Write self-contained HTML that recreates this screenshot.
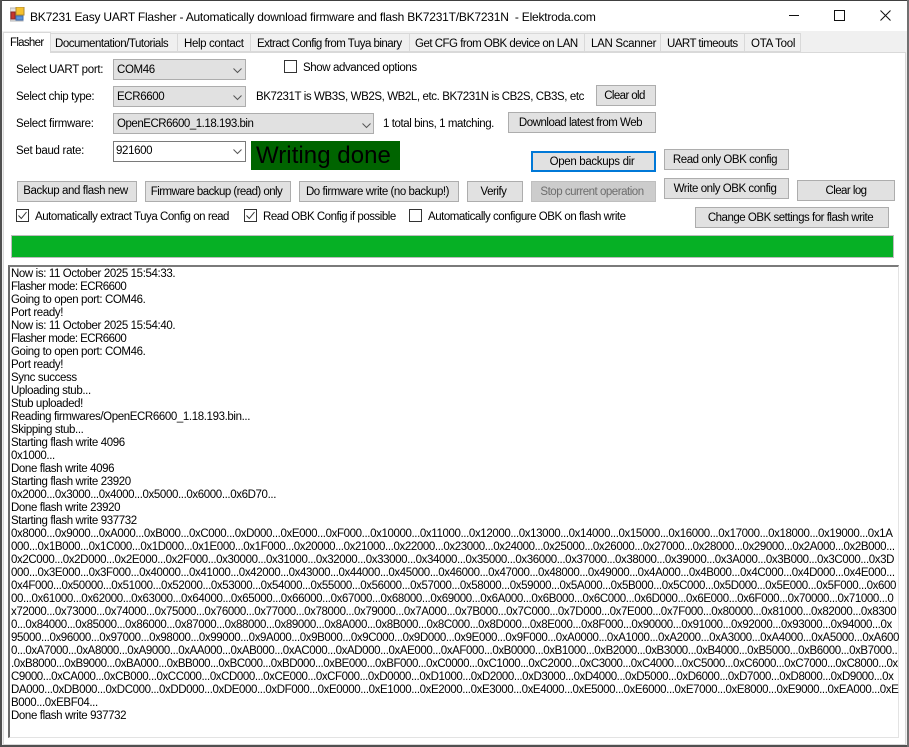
<!DOCTYPE html>
<html><head><meta charset="utf-8"><style>
html,body{margin:0;padding:0;background:#fff}
#w{position:relative;width:909px;height:747px;overflow:hidden;background:#fff;font-family:"Liberation Sans",Arial,sans-serif;font-size:11.5px;color:#000;letter-spacing:-.46px}
#w div{position:absolute;box-sizing:border-box;white-space:pre}
.t{height:14px;line-height:16px}
.a{letter-spacing:-.48px}
.b{background:#e1e1e1;border:1px solid #adadad;text-align:center;line-height:20px;letter-spacing:-.48px;padding-right:3px}
.c{background:#e1e1e1;border:1px solid #adadad;line-height:21px;padding-left:3px;letter-spacing:-.36px}
.k{width:13px;height:13px;border:1px solid #333;background:#fff}
.l{left:11px;height:13px;line-height:15px;letter-spacing:-.385px}
svg{position:absolute}
</style></head><body><div id="w">
<div style="left:0;top:0;width:909px;height:1px;background:#404040"></div>
<div style="left:1px;top:31px;width:907px;height:715px;background:#f0f0f0"></div>
<div style="left:3px;top:52px;width:903px;height:693px;background:#fff;border:1px solid #d9d9d9"></div>
<div style="left:0;top:0;width:2px;height:747px;background:#505050"></div>
<div style="left:0;top:745px;width:909px;height:2px;background:#505050"></div>
<div style="left:907px;top:0;width:2px;height:747px;background:#707070"></div>
<svg style="left:10px;top:7px" width="15" height="15" viewBox="0 0 15 15"><rect x="0" y="1" width="13" height="13" fill="#e4e4e4" stroke="#b5b5b5"/><rect x="6" y="0" width="8" height="8" fill="#f6c12f" stroke="#b08a30"/><rect x="1" y="5" width="4" height="7" fill="#c8342c" stroke="#8a2a2a"/><rect x="6" y="9" width="7" height="4" fill="#5a92dc" stroke="#3f6fb5"/></svg>
<div class="t" style="left:30px;top:9px;font-size:12px;letter-spacing:-.22px">BK7231 Easy UART Flasher - Automatically download firmware and flash BK7231T/BK7231N  - Elektroda.com</div>
<div style="left:789px;top:15px;width:10px;height:1px;background:#111"></div>
<div style="left:834px;top:10px;width:11px;height:11px;border:1px solid #111"></div>
<svg style="left:880px;top:10px" width="11" height="11" viewBox="0 0 11 11"><path d="M.5.5l10 10M10.5.5l-10 10" stroke="#111" fill="none"/></svg>

<div class="t" style="left:3px;top:32px;width:48px;height:21px;background:#fff;border:1px solid #d9d9d9;border-bottom:0;padding:2px 0 0 6px;letter-spacing:-.7px">Flasher</div>
<div class="t" style="left:51px;top:33px;width:127px;height:19px;background:#f0f0f0;border:1px solid #d9d9d9;padding:2px 0 0 4px;border-left:0;letter-spacing:-.48px">Documentation/Tutorials</div>
<div class="t" style="left:178px;top:33px;width:73px;height:19px;background:#f0f0f0;border:1px solid #d9d9d9;padding:2px 0 0 6px;border-left:0;letter-spacing:-.36px">Help contact</div>
<div class="t" style="left:251px;top:33px;width:159px;height:19px;background:#f0f0f0;border:1px solid #d9d9d9;padding:2px 0 0 6px;border-left:0;letter-spacing:-.53px">Extract Config from Tuya binary</div>
<div class="t" style="left:410px;top:33px;width:175px;height:19px;background:#f0f0f0;border:1px solid #d9d9d9;padding:2px 0 0 5px;border-left:0;letter-spacing:-.5px">Get CFG from OBK device on LAN</div>
<div class="t" style="left:585px;top:33px;width:76px;height:19px;background:#f0f0f0;border:1px solid #d9d9d9;padding:2px 0 0 6px;border-left:0;letter-spacing:-.3px">LAN Scanner</div>
<div class="t" style="left:661px;top:33px;width:84px;height:19px;background:#f0f0f0;border:1px solid #d9d9d9;padding:2px 0 0 6px;border-left:0;letter-spacing:-.53px">UART timeouts</div>
<div class="t" style="left:745px;top:33px;width:56px;height:19px;background:#f0f0f0;border:1px solid #d9d9d9;padding:2px 0 0 6px;border-left:0;letter-spacing:-.25px">OTA Tool</div>

<div class="t" style="left:16px;top:62px;letter-spacing:-.3px">Select UART port:</div>
<div class="c" style="left:113px;top:59px;width:133px;height:21px">COM46</div>
<div class="k" style="left:284px;top:60px"></div>
<div class="t" style="left:303px;top:60px;letter-spacing:-.4px">Show advanced options</div>

<div class="t" style="left:16px;top:89px;letter-spacing:-.36px">Select chip type:</div>
<div class="c" style="left:113px;top:86px;width:133px;height:21px">ECR6600</div>
<div class="t" style="left:256px;top:89px;letter-spacing:-.4px">BK7231T is WB3S, WB2S, WB2L, etc. BK7231N is CB2S, CB3S, etc</div>
<div class="b" style="left:596px;top:85px;width:60px;height:21px;letter-spacing:-.6px">Clear old</div>

<div class="t" style="left:16px;top:116px;letter-spacing:-.3px">Select firmware:</div>
<div class="c" style="left:113px;top:113px;width:261px;height:21px;letter-spacing:-.47px">OpenECR6600_1.18.193.bin</div>
<div class="t" style="left:383px;top:116px;letter-spacing:-.42px">1 total bins, 1 matching.</div>
<div class="b" style="left:508px;top:112px;width:148px;height:21px">Download latest from Web</div>

<div class="t" style="left:16px;top:143px;letter-spacing:-.3px">Set baud rate:</div>
<div class="c" style="left:113px;top:141px;width:133px;height:21px;background:#fff;border-color:#7a7a7a;padding-left:2px;line-height:19px">921600</div>
<div style="left:251px;top:141px;width:149px;height:29px;background:#006400;font-size:24px;line-height:29px;padding-left:5px;letter-spacing:.05px">Writing done</div>

<svg style="left:233px;top:68px" width="10" height="6"><path d="M.5.5L4.5 4.5L8.5.5" stroke="#555" fill="none"/></svg>
<svg style="left:233px;top:95px" width="10" height="6"><path d="M.5.5L4.5 4.5L8.5.5" stroke="#555" fill="none"/></svg>
<svg style="left:362px;top:123px" width="10" height="6"><path d="M.5.5L4.5 4.5L8.5.5" stroke="#555" fill="none"/></svg>
<svg style="left:233px;top:149px" width="10" height="6"><path d="M.5.5L4.5 4.5L8.5.5" stroke="#555" fill="none"/></svg>

<div class="b" style="left:531px;top:151px;width:125px;height:21px;border:2px solid #0078d7;line-height:19px;letter-spacing:-.34px">Open backups dir</div>
<div class="b" style="left:664px;top:149px;width:125px;height:21px;letter-spacing:-.45px">Read only OBK config</div>
<div class="b" style="left:664px;top:178px;width:125px;height:21px;letter-spacing:-.45px">Write only OBK config</div>
<div class="b" style="left:797px;top:180px;width:98px;height:21px;letter-spacing:-.55px;padding-right:0">Clear log</div>
<div class="b" style="left:17px;top:181px;width:120px;height:21px;letter-spacing:-.4px;line-height:18px">Backup and flash new</div>
<div class="b" style="left:145px;top:181px;width:146px;height:21px;letter-spacing:-.55px">Firmware backup (read) only</div>
<div class="b" style="left:299px;top:181px;width:160px;height:21px;letter-spacing:-.45px">Do firmware write (no backup!)</div>
<div class="b" style="left:467px;top:181px;width:56px;height:21px">Verify</div>
<div class="b" style="left:531px;top:181px;width:125px;height:21px;background:#ccc;border-color:#bfbfbf;color:#6d6d6d">Stop current operation</div>
<div class="b" style="left:695px;top:207px;width:194px;height:21px">Change OBK settings for flash write</div>

<div class="k" style="left:16px;top:209px"></div>
<svg style="left:16px;top:209px" width="13" height="13"><path d="M2.5 6.5L5.3 9.5L10.5 3" stroke="#333" fill="none"/></svg>
<div class="t" style="left:35px;top:209px">Automatically extract Tuya Config on read</div>
<div class="k" style="left:244px;top:209px"></div>
<svg style="left:244px;top:209px" width="13" height="13"><path d="M2.5 6.5L5.3 9.5L10.5 3" stroke="#333" fill="none"/></svg>
<div class="t" style="left:263px;top:209px;letter-spacing:-.48px">Read OBK Config if possible</div>
<div class="k" style="left:409px;top:209px"></div>
<div class="t" style="left:428px;top:209px;letter-spacing:-.47px">Automatically configure OBK on flash write</div>

<div style="left:11px;top:235px;width:883px;height:23px;background:#06b025;border:1px solid #bcbcbc"></div>

<div style="left:8px;top:265px;width:891px;height:473px;background:#fff;border:1px solid #e3e3e3;border-top:2px solid #7a7a7a;border-left:2px solid #6e6e6e"></div>

<div class="l" style="top:267px">Now is: 11 October 2025 15:54:33.</div>
<div class="l" style="top:280px;letter-spacing:-.54px">Flasher mode: ECR6600</div>
<div class="l" style="top:293px">Going to open port: COM46.</div>
<div class="l" style="top:306px">Port ready!</div>
<div class="l" style="top:319px">Now is: 11 October 2025 15:54:40.</div>
<div class="l" style="top:332px;letter-spacing:-.54px">Flasher mode: ECR6600</div>
<div class="l" style="top:345px">Going to open port: COM46.</div>
<div class="l" style="top:358px">Port ready!</div>
<div class="l" style="top:371px">Sync success</div>
<div class="l" style="top:384px">Uploading stub...</div>
<div class="l" style="top:397px">Stub uploaded!</div>
<div class="l" style="top:410px">Reading firmwares/OpenECR6600_1.18.193.bin...</div>
<div class="l" style="top:423px">Skipping stub...</div>
<div class="l" style="top:436px">Starting flash write 4096</div>
<div class="l" style="top:449px">0x1000...</div>
<div class="l" style="top:462px">Done flash write 4096</div>
<div class="l" style="top:475px">Starting flash write 23920</div>
<div class="l" style="top:488px">0x2000...0x3000...0x4000...0x5000...0x6000...0x6D70...</div>
<div class="l" style="top:501px">Done flash write 23920</div>
<div class="l" style="top:514px">Starting flash write 937732</div>
<div class="l" style="top:527px">0x8000...0x9000...0xA000...0xB000...0xC000...0xD000...0xE000...0xF000...0x10000...0x11000...0x12000...0x13000...0x14000...0x15000...0x16000...0x17000...0x18000...0x19000...0x1A</div>
<div class="l" style="top:540px">000...0x1B000...0x1C000...0x1D000...0x1E000...0x1F000...0x20000...0x21000...0x22000...0x23000...0x24000...0x25000...0x26000...0x27000...0x28000...0x29000...0x2A000...0x2B000...</div>
<div class="l" style="top:553px">0x2C000...0x2D000...0x2E000...0x2F000...0x30000...0x31000...0x32000...0x33000...0x34000...0x35000...0x36000...0x37000...0x38000...0x39000...0x3A000...0x3B000...0x3C000...0x3D</div>
<div class="l" style="top:566px">000...0x3E000...0x3F000...0x40000...0x41000...0x42000...0x43000...0x44000...0x45000...0x46000...0x47000...0x48000...0x49000...0x4A000...0x4B000...0x4C000...0x4D000...0x4E000...</div>
<div class="l" style="top:579px;letter-spacing:-.39px">0x4F000...0x50000...0x51000...0x52000...0x53000...0x54000...0x55000...0x56000...0x57000...0x58000...0x59000...0x5A000...0x5B000...0x5C000...0x5D000...0x5E000...0x5F000...0x600</div>
<div class="l" style="top:592px">00...0x61000...0x62000...0x63000...0x64000...0x65000...0x66000...0x67000...0x68000...0x69000...0x6A000...0x6B000...0x6C000...0x6D000...0x6E000...0x6F000...0x70000...0x71000...0</div>
<div class="l" style="top:605px">x72000...0x73000...0x74000...0x75000...0x76000...0x77000...0x78000...0x79000...0x7A000...0x7B000...0x7C000...0x7D000...0x7E000...0x7F000...0x80000...0x81000...0x82000...0x8300</div>
<div class="l" style="top:618px;letter-spacing:-.39px">0...0x84000...0x85000...0x86000...0x87000...0x88000...0x89000...0x8A000...0x8B000...0x8C000...0x8D000...0x8E000...0x8F000...0x90000...0x91000...0x92000...0x93000...0x94000...0x</div>
<div class="l" style="top:631px;letter-spacing:-.39px">95000...0x96000...0x97000...0x98000...0x99000...0x9A000...0x9B000...0x9C000...0x9D000...0x9E000...0x9F000...0xA0000...0xA1000...0xA2000...0xA3000...0xA4000...0xA5000...0xA600</div>
<div class="l" style="top:644px;letter-spacing:-.402px">0...0xA7000...0xA8000...0xA9000...0xAA000...0xAB000...0xAC000...0xAD000...0xAE000...0xAF000...0xB0000...0xB1000...0xB2000...0xB3000...0xB4000...0xB5000...0xB6000...0xB7000..</div>
<div class="l" style="top:657px;letter-spacing:-.447px">.0xB8000...0xB9000...0xBA000...0xBB000...0xBC000...0xBD000...0xBE000...0xBF000...0xC0000...0xC1000...0xC2000...0xC3000...0xC4000...0xC5000...0xC6000...0xC7000...0xC8000...0x</div>
<div class="l" style="top:670px;letter-spacing:-.42px">C9000...0xCA000...0xCB000...0xCC000...0xCD000...0xCE000...0xCF000...0xD0000...0xD1000...0xD2000...0xD3000...0xD4000...0xD5000...0xD6000...0xD7000...0xD8000...0xD9000...0x</div>
<div class="l" style="top:683px;letter-spacing:-.4px">DA000...0xDB000...0xDC000...0xDD000...0xDE000...0xDF000...0xE0000...0xE1000...0xE2000...0xE3000...0xE4000...0xE5000...0xE6000...0xE7000...0xE8000...0xE9000...0xEA000...0xE</div>
<div class="l" style="top:696px">B000...0xEBF04...</div>
<div class="l" style="top:709px">Done flash write 937732</div>
</div></body></html>
